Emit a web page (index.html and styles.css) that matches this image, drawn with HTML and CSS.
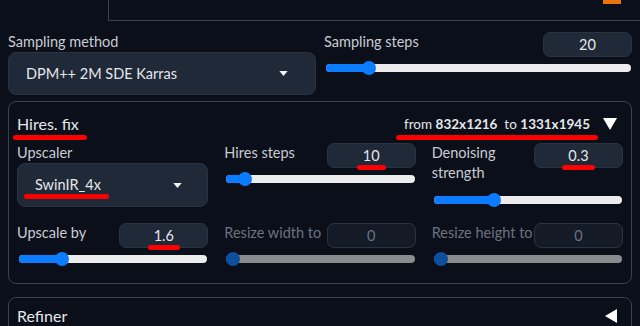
FILE: index.html
```html
<!DOCTYPE html>
<html>
<head>
  <meta charset="utf-8">
  <title>txt2img settings</title>
  <link rel="stylesheet" href="styles.css">
</head>
<body>
  <div class="top-frame"><span class="top-accent"></span></div>

  <div class="row-top">
    <div class="field">
      <label class="label">Sampling method</label>
      <div class="dropdown dropdown-lg">
        <span class="dropdown-text">DPM++ 2M SDE Karras</span>
        <svg class="caret" viewBox="0 0 10 6"><path d="M0 0h10L5 6z" fill="currentColor"/></svg>
      </div>
    </div>
    <div class="field">
      <div class="slider-head">
        <label class="label">Sampling steps</label>
        <div class="number">20</div>
      </div>
      <div class="slider"><div class="fill" style="width: 14%"></div></div>
    </div>
  </div>

  <div class="panel">
    <div class="panel-head">
      <span class="panel-title"><span class="mark mark-title">Hires. fix</span></span>
      <span class="panel-info mark">from <b>832x1216</b>&nbsp; to <b>1331x1945</b></span>
      <svg class="tri" viewBox="0 0 14 12"><path d="M0 0h14L7 12z" fill="currentColor"/></svg>
    </div>

    <div class="grid">
      <div class="field">
        <label class="label">Upscaler</label>
        <div class="dropdown dropdown-sm">
          <span class="dropdown-text"><span class="mark mark-drop">SwinIR_4x</span></span>
          <svg class="caret" viewBox="0 0 10 6"><path d="M0 0h10L5 6z" fill="currentColor"/></svg>
        </div>
      </div>
      <div class="field">
        <div class="slider-head">
          <label class="label">Hires steps</label>
          <div class="number"><span class="mark mark-sm">10</span></div>
        </div>
        <div class="slider"><div class="fill" style="width: 10%"></div></div>
      </div>
      <div class="field">
        <div class="slider-head">
          <label class="label">Denoising<br>strength</label>
          <div class="number"><span class="mark mark-sm">0.3</span></div>
        </div>
        <div class="slider"><div class="fill" style="width: 32%"></div></div>
      </div>

      <div class="field">
        <div class="slider-head">
          <label class="label">Upscale by</label>
          <div class="number"><span class="mark mark-sm">1.6</span></div>
        </div>
        <div class="slider"><div class="fill" style="width: 23%"></div></div>
      </div>
      <div class="field disabled">
        <div class="slider-head">
          <label class="label">Resize width to</label>
          <div class="number">0</div>
        </div>
        <div class="slider"><div class="fill" style="width: 0%"></div></div>
      </div>
      <div class="field disabled">
        <div class="slider-head">
          <label class="label">Resize height to</label>
          <div class="number">0</div>
        </div>
        <div class="slider"><div class="fill" style="width: 0%"></div></div>
      </div>
    </div>
  </div>

  <div class="panel panel-closed">
    <div class="panel-head">
      <span class="panel-title">Refiner</span>
      <svg class="tri" viewBox="0 0 12 14"><path d="M12 0v14L0 7z" fill="currentColor"/></svg>
    </div>
  </div>
</body>
</html>
```

FILE: styles.css
```css
:root {
  --bg: #0b0f19;
  --input-bg: #1f2937;
  --border: #374151;
  --border-soft: #2b3342;
  --text: #e5e7eb;
  --label: #c9ccd2;
  --muted: #6b7280;
  --blue: #0b7bff;
  --blue-dim: #0d4f9e;
  --track: #ececec;
  --track-dim: #8a8b8d;
  --mark: #ff0000;
}

* {
  margin: 0;
  padding: 0;
  box-sizing: border-box;
}

body {
  width: 640px;
  height: 326px;
  overflow: hidden;
  background: var(--bg);
  color: var(--text);
  font-family: Lato, 'Noto Sans', sans-serif;
  font-size: 14.5px;
  line-height: 20px;
}

.top-frame {
  position: relative;
  margin-left: 108px;
  height: 21px;
  border-left: 1px solid var(--border);
  border-bottom: 1px solid var(--border);
}

.top-accent {
  position: absolute;
  top: 0;
  left: 494px;
  width: 18px;
  height: 4px;
  background: #e8740c;
}

.row-top {
  display: grid;
  grid-template-columns: 1fr 1fr;
  gap: 8px;
  padding: 0 8px;
  margin-top: 11px;
}

.label {
  display: block;
  color: var(--label);
  white-space: nowrap;
}

.dropdown {
  display: flex;
  align-items: center;
  background: var(--input-bg);
  border: 1px solid var(--border-soft);
  border-radius: 8px;
}

.dropdown-lg {
  height: 43px;
  padding: 0 27px 0 17px;
}

.dropdown-sm {
  height: 44px;
  padding: 0 25px 0 17px;
}

.dropdown-text {
  flex: 1;
  color: var(--text);
}

.caret {
  width: 9px;
  height: 5px;
  color: #f3f4f6;
}

.slider-head {
  display: flex;
  justify-content: space-between;
  align-items: flex-start;
}

.number {
  width: 89px;
  height: 25px;
  background: var(--input-bg);
  border: 1px solid var(--border-soft);
  border-radius: 7px;
  text-align: center;
  line-height: 23px;
  color: var(--text);
}

.slider {
  position: relative;
  height: 8px;
  margin: 7px 1px 0 2px;
  background: var(--track);
  border-radius: 4px;
}

.fill {
  display: flex;
  justify-content: flex-end;
  min-width: 7px;
  height: 100%;
  background: var(--blue);
  border-radius: 4px 0 0 4px;
}

.fill::after {
  content: "";
  position: relative;
  top: -3px;
  flex-shrink: 0;
  width: 14px;
  height: 14px;
  margin-right: -7px;
  background: var(--blue);
  border-radius: 50%;
}

.disabled .label {
  color: var(--muted);
}

.disabled .number {
  color: var(--muted);
  background: #151b26;
}

.disabled .slider {
  background: var(--track-dim);
}

.disabled .fill,
.disabled .fill::after {
  background: var(--blue-dim);
}

.panel {
  margin: 6px 8px 0;
  border: 1px solid var(--border);
  border-radius: 8px;
  padding: 0 8px;
}

.panel-head {
  display: flex;
  align-items: center;
  height: 41px;
  padding-top: 2px;
}

.panel-title {
  flex: 1;
  font-size: 16px;
  color: var(--text);
}

.panel-info {
  font-size: 13.5px;
  color: var(--text);
  margin-right: 13px;
}

.panel-info b {
  font-weight: 700;
}

.tri {
  width: 14px;
  height: 12px;
  margin-right: 6px;
  color: #ffffff;
}

.panel-closed {
  margin-top: 13px;
  height: 40px;
}

.panel-closed .panel-head {
  height: 36px;
  padding-top: 0;
}

.panel-closed .tri {
  width: 12px;
  height: 14px;
}

.grid {
  display: grid;
  grid-template-columns: repeat(3, 1fr);
  column-gap: 16px;
}

.grid .field {
  height: 80px;
}

.grid .field:nth-child(n+4) {
  height: 60px;
}

.grid .field:nth-child(3) .slider {
  margin-top: 13px;
}

/* red annotation strokes */
.mark {
  position: relative;
  display: inline-block;
}

.mark::after {
  content: "";
  position: absolute;
  left: -8px;
  right: -8px;
  bottom: -6px;
  height: 5px;
  background: var(--mark);
  border-radius: 3px;
}

.mark-title::after {
  left: -4px;
  right: -8px;
}

.mark-drop::after {
  left: -11px;
  right: -8px;
  bottom: -4px;
}

.mark-sm::after {
  left: -6px;
  right: -6px;
  bottom: -3px;
}
```
